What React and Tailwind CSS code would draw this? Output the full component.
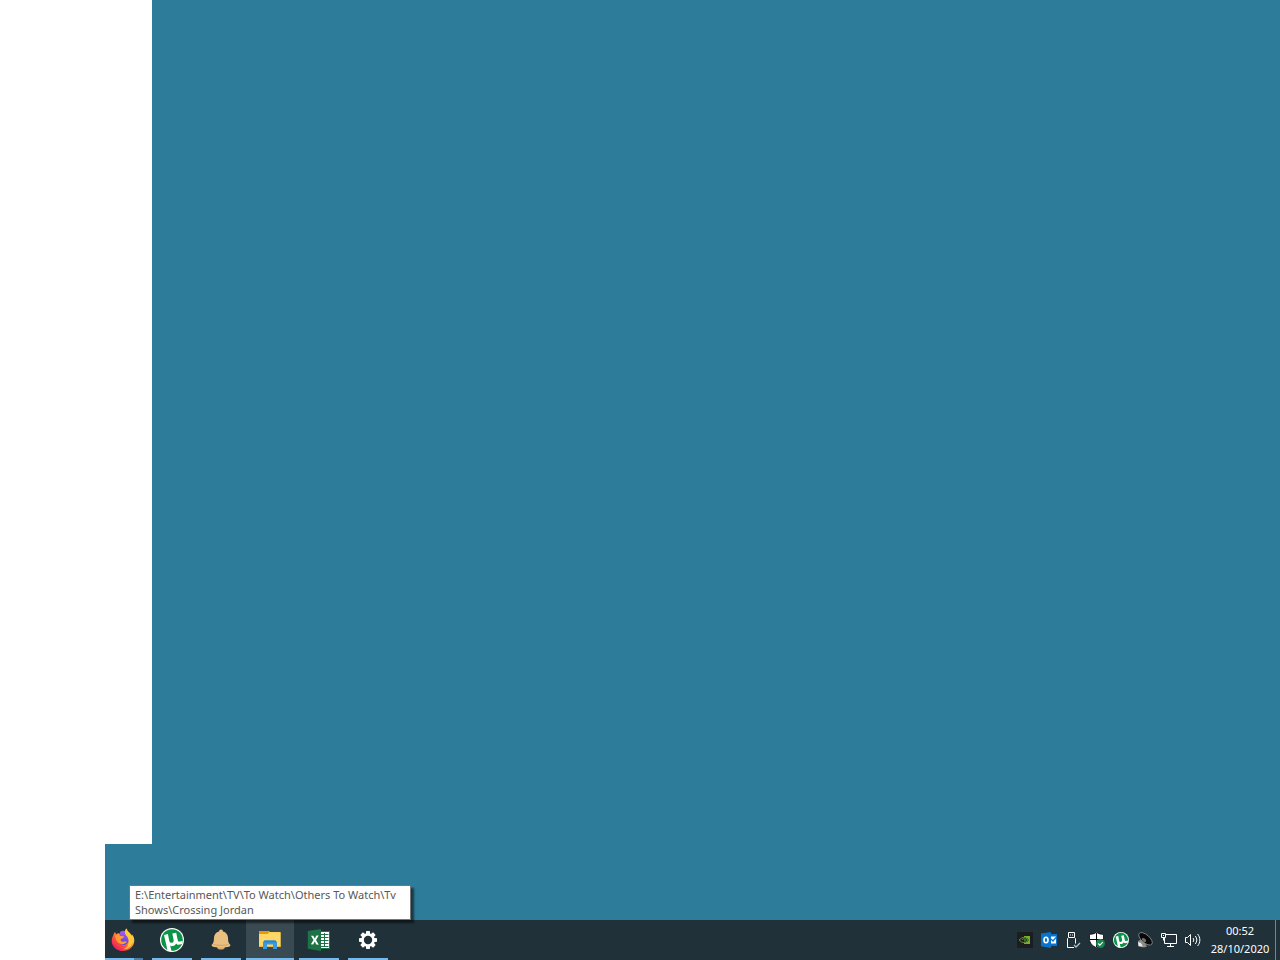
import React from 'react';

const FirefoxIcon = () => (
    <svg viewBox="0 0 24 24" className="size-6">
        <defs>
            <linearGradient id="fox" x1="0.85" y1="0.1" x2="0.2" y2="0.9">
                <stop offset="0" stopColor="#ffe84a" />
                <stop offset="0.35" stopColor="#ffb52e" />
                <stop offset="0.65" stopColor="#ff5a36" />
                <stop offset="1" stopColor="#ee1f63" />
            </linearGradient>
            <linearGradient id="globe" x1="0.5" y1="0" x2="0.5" y2="1">
                <stop offset="0" stopColor="#a659f0" />
                <stop offset="1" stopColor="#5a46d8" />
            </linearGradient>
        </defs>
        <path d="M2.200 7.400C2.600 5.600 3.400 4.600 4.200 4c.1 1 .4 1.600.9 2.200C6 5.500 7 5.200 7.800 5.200L12 8l2.500-4.500c.1-1.300.5-2.500 1.300-3.100.2 2.200 2 3.300 3.200 4.900.9.900 1.300 1.900 1.500 2.600.3-.5.3-1.100.2-1.700 2 1.900 2.800 4.500 2.600 7.100C22.700 19 18 23 12 23S.7 18.900.7 12.900c0-2.200.5-4 1.500-5.500z" fill="url(#fox)" />
        <path d="M9 4C11.500 2.200 14.500 2.500 16.500 5c2 2.500 2.500 6 1 9-1.300 2.400-3.700 3.400-6 3-3-.7-4-3-3.500-5.500z" fill="url(#globe)" />
        <path d="M15.300.4c.2 2.200 2 3.300 3.500 4.900 3.500 3.800 3.700 9.500.4 13.300-1.500 1.800-4 2.800-6.500 2.600 3-1.200 5-3.800 5-7.200 0-3-1-5-2.500-6.500-1.600-2-2-5 .1-7.100z" fill="#ffc93a" />
        <path d="M3.800 7.600c2-1.300 4.200-.8 5.400.5 1 .1 2.900.1 3.800.3-.2 1.500-2.100 2.100-3.300 2.800-.2 1.200.4 2 1.200 2.300 1.700.6 2.900-.6 4.100-.3.8.3.7 1.100.1 1.500-1.200 1-2.800 1.900-4.800 1.500C6 15.200 4.900 11.500 3.800 7.600z" fill="#ff9a35" />
    </svg>
);

const UTorrentIcon = ({ className }) => (
    <svg viewBox="0 0 24 24" className={className}>
        <circle cx="12" cy="12" r="12" fill="#fff" />
        <circle cx="12" cy="12" r="10.800" fill="#0b9347" />
        <path d="M4 6.900l3.900-.8 1.300 6.500c.4 1.900 1.500 2.500 2.800 2.200 1.400-.3 1.900-1.500 1.600-3.100l-1.300-6.200 3.900-.8 1.500 7.400c.3 1.300.9 1.700 1.800 1.500l3.200-.7-.4 3.100-2.300.6c-1.800.4-3.100.1-3.900-1.200-.7 1.500-1.700 2.300-3.200 2.600-1.200.3-2 .1-2.700-.4l1.400 6.200-4-1z" fill="#fff" />
    </svg>
);

const BellIcon = () => (
    <svg viewBox="0 0 24 24" className="size-6">
        <ellipse cx="12" cy="19.500" rx="3.700" ry="2" fill="#d9ab6b" />
        <path d="M10 3.500a2 2 0 0 1 4 0c3.100.8 4.800 3 5 6 .1 3.500.3 5.500 2 7 .6.500.5 1.500-.5 1.900-2 .7-5 1-8.500 1s-6.500-.3-8.500-1c-1-.4-1.100-1.400-.5-1.900 1.700-1.500 1.900-3.500 2-7 .2-3 1.900-5.200 5-6z" fill="#e9c080" />
        <path d="M4.500 16.500c4 1.200 11 1.200 15 0" fill="none" stroke="#c99c5f" strokeWidth="0.800" />
    </svg>
);

const ExplorerIcon = () => (
    <svg viewBox="0 0 24 24" className="size-6">
        <path d="M1 3h9.500l1.500 1H22.500v14H1z" fill="#f8c83d" />
        <path d="M1 3h9l1.200 1.500L10 6H1z" fill="#e79a08" />
        <path d="M11 4.500h11.500V19H1V6h9z" fill="#ffd766" />
        <path d="M1 17.800h21.500V19H1z" fill="#edbd45" />
        <path d="M6.500 12.500h11l1.500 2V21h-4v-4.500H9V21H5v-6.500z" fill="#399be2" />
        <path d="M6.500 12.500h11l1.500 2H5z" fill="#2a87cf" />
    </svg>
);

const ExcelIcon = () => (
    <svg viewBox="0 0 24 24" className="size-6">
        <path d="M13 3.500h9.500v17H13z" fill="#fff" stroke="#1d7346" />
        <path d="M14 6.500h7.500M14 9.500h7.500M14 12.500h7.500M14 15.500h7.500M14 18.500h7.500" stroke="#1d7346" />
        <path d="M17.500 5v14" stroke="#1d7346" />
        <path d="M.8 3L14 1v22L.8 20.700z" fill="#1d7346" />
        <path d="M4 7.800l2.300-.1 1.500 2.800 1.600-3 2.300-.1-2.700 4.600 2.800 4.700-2.500-.1-1.600-3-1.500 2.800-2.300-.1L6.500 12z" fill="#fff" />
    </svg>
);

const SettingsIcon = () => (
    <svg viewBox="0 0 24 24" className="size-6">
        <g fill="#fff">
            {[0, 45, 90, 135, 180, 225, 270, 315].map((angle) => (
                <path key={angle} d="M10.200 3h3.600l.5 4h-4.600z" transform={`rotate(${angle} 12 12)`} />
            ))}
        </g>
        <circle cx="12" cy="12" r="5.500" fill="none" stroke="#fff" strokeWidth="2.600" />
    </svg>
);

const NvidiaIcon = () => (
    <svg viewBox="0 0 16 16" className="size-4">
        <path d="M0 0h16v16H0z" fill="#1b1d1e" />
        <path d="M7 4h6v8H7z" fill="#6fb331" />
        <path d="M7 5c2 .1 3.500 1.300 4.700 3-1.200 1.700-2.700 2.800-4.700 3z" fill="#1b1d1e" />
        <path d="M2.300 8C3.500 6.300 5 5.500 6.700 5.500S9.700 6.400 10.700 8c-1 1.600-2.300 2.500-4 2.500S3.500 9.700 2.300 8z" fill="none" stroke="#76b93a" strokeWidth="0.800" />
        <path d="M5 8c.4-.8 1.100-1.200 1.800-1.200S8.200 7.200 8.600 8L7 9.200" fill="none" stroke="#76b93a" strokeWidth="0.800" />
    </svg>
);

const OutlookIcon = () => (
    <svg viewBox="0 0 16 16" className="size-4">
        <path d="M9 2h7v12H9z" fill="#0873cd" />
        <path d="M9 4.500h6v7H9z" fill="#fff" />
        <path d="M10 7l2 2L15 5.500" fill="none" stroke="#0873cd" strokeWidth="1.200" />
        <path d="M0 1.500L10 0v16L0 14.300z" fill="#0873cd" />
        <ellipse cx="5" cy="8" rx="2" ry="2.700" fill="none" stroke="#fff" strokeWidth="1.600" />
    </svg>
);

const UsbIcon = () => (
    <svg viewBox="0 0 16 16" className="size-4" fill="none" stroke="#fff">
        <path d="M3.500 5V.5h6V5M5 3h1M7 3h1" />
        <path d="M9 15.500H2.500v-9l1-1h6l1 1v5" />
        <path d="M9 13l2 2 4-4" stroke="#b4bcc0" strokeWidth="1.300" />
    </svg>
);

const DefenderIcon = () => (
    <svg viewBox="0 0 16 16" className="size-4">
        <path d="M7.500.2C5.500 1.900 3 2.300.5 2.300V7c0 4 3 7 7 8.700C11.500 14 14.500 11 14.500 7V2.300c-2.500 0-5-.4-7-2.100z" fill="#fff" stroke="#050809" strokeWidth="0.800" />
        <path d="M7.500 1v14M1 7.500h13" stroke="#050809" />
        <circle cx="11.500" cy="11.500" r="4.500" fill="#15864c" />
        <path d="M9.300 11.500l1.600 1.600 2.900-3" fill="none" stroke="#fff" strokeWidth="1.100" />
    </svg>
);

const SpeakerIcon = () => (
    <svg viewBox="0 0 16 16" className="size-4">
        <path d="M1 9l4-2 3 4 2 3.500-3 1-5.500-1z" fill="#8b8b89" />
        <ellipse cx="8.500" cy="6.800" rx="4" ry="8.300" transform="rotate(-49 8.500 6.800)" fill="#080808" stroke="#9fa2a3" strokeWidth="0.700" />
        <ellipse cx="7" cy="8" rx="1.500" ry="2.500" transform="rotate(-49 7 8)" fill="#77716d" />
        <path d="M1 10l3 1 2 3.500-4.500-.5z" fill="#e9e8e2" />
    </svg>
);

const NetworkIcon = () => (
    <svg viewBox="0 0 16 16" className="size-4" fill="none" stroke="#fff">
        <path d="M5 2.500h10.500v9h-12V6M9.500 11.500v3M6 14.500h7" />
        <path d="M.5 1.500h4v4h-4zM2.500 5.500v3" />
        <path d="M2 3.500h1" />
    </svg>
);

const VolumeIcon = () => (
    <svg viewBox="0 0 16 16" className="size-4" fill="none" stroke="#fff">
        <path d="M.5 5.500h2l3-3v11l-3-3h-2z" />
        <path d="M8 6c1 1.200 1 2.800 0 4M10.300 4c2 2.400 2 5.600 0 8M12.600 2c3 3.600 3 8.400 0 12" />
    </svg>
);

const tasks = [
    { name: 'uTorrent', icon: <UTorrentIcon className="size-6" /> },
    { name: 'Notifications', icon: <BellIcon /> },
    { name: 'File Explorer', icon: <ExplorerIcon />, active: true },
    { name: 'Excel', icon: <ExcelIcon /> },
    { name: 'Settings', icon: <SettingsIcon /> },
];

const trayItems = [
    { name: 'NVIDIA Settings', icon: <NvidiaIcon /> },
    { name: 'Outlook', icon: <OutlookIcon /> },
    { name: 'Safely Remove Hardware', icon: <UsbIcon /> },
    { name: 'Windows Security', icon: <DefenderIcon /> },
    { name: 'uTorrent', icon: <UTorrentIcon className="size-4" /> },
    { name: 'Audio Manager', icon: <SpeakerIcon /> },
    { name: 'Network', icon: <NetworkIcon /> },
    { name: 'Volume', icon: <VolumeIcon /> },
];

const TaskButton = ({ name, icon, active }) => (
    <button
        aria-label={name}
        className={`flex h-10 w-12 flex-col items-center justify-between pt-2 ${active ? "bg-[#3a4a52]" : ""}`}
    >
        {icon}
        <span className={`h-0.5 bg-[#76b9ed] ${active ? "w-full" : "w-10"}`} />
    </button>
);

const Taskbar = () => (
    <footer className="flex h-10 justify-between bg-[#213139]">
        <nav className="flex gap-px" aria-label="Running apps">
            {/* Firefox has several windows, so its underline is in two parts */}
            <button aria-label="Firefox" className="flex h-10 w-[42px] flex-col justify-between pt-2">
                <span className="ml-1.5"><FirefoxIcon /></span>
                <span className="flex h-0.5">
                    <span className="w-[29px] bg-[#76b9ed]" />
                    <span className="w-[9px] bg-[#4d7fa5]" />
                </span>
            </button>
            {tasks.map((task) => (
                <TaskButton key={task.name} {...task} />
            ))}
        </nav>

        <div className="flex">
            {trayItems.map((item) => (
                <button key={item.name} aria-label={item.name} className="flex w-6 items-center justify-center">
                    {item.icon}
                </button>
            ))}
            <button className="w-[70px] text-center text-[11px] leading-[18px] text-white">
                <time className="block">00:52</time>
                <time className="block">28/10/2020</time>
            </button>
            <button aria-label="Show desktop" className="w-[5px] border-l border-[#77868d]" />
        </div>
    </footer>
);

const App = () => {
    return (
        <div className="flex min-h-screen flex-col bg-white font-['Noto_Sans',sans-serif]">
            <main className="ml-[152px] flex-1 bg-[#2d7d9a]" />
            <div className="relative ml-[105px]">
                <div className="h-[76px] bg-[#2d7d9a]" />
                <Taskbar />
                <div
                    role="tooltip"
                    className="absolute left-6 top-[41px] w-[282px] border border-[#767676] bg-white pb-0.5 pl-[5px] pt-px text-[11px] leading-[15px] text-[#575757] shadow-[3px_3px_2px_rgba(0,0,0,0.55)]"
                >
                    E:\Entertainment\TV\To Watch\Others To Watch\Tv Shows\Crossing Jordan
                </div>
            </div>
        </div>
    );
};

export default App;
